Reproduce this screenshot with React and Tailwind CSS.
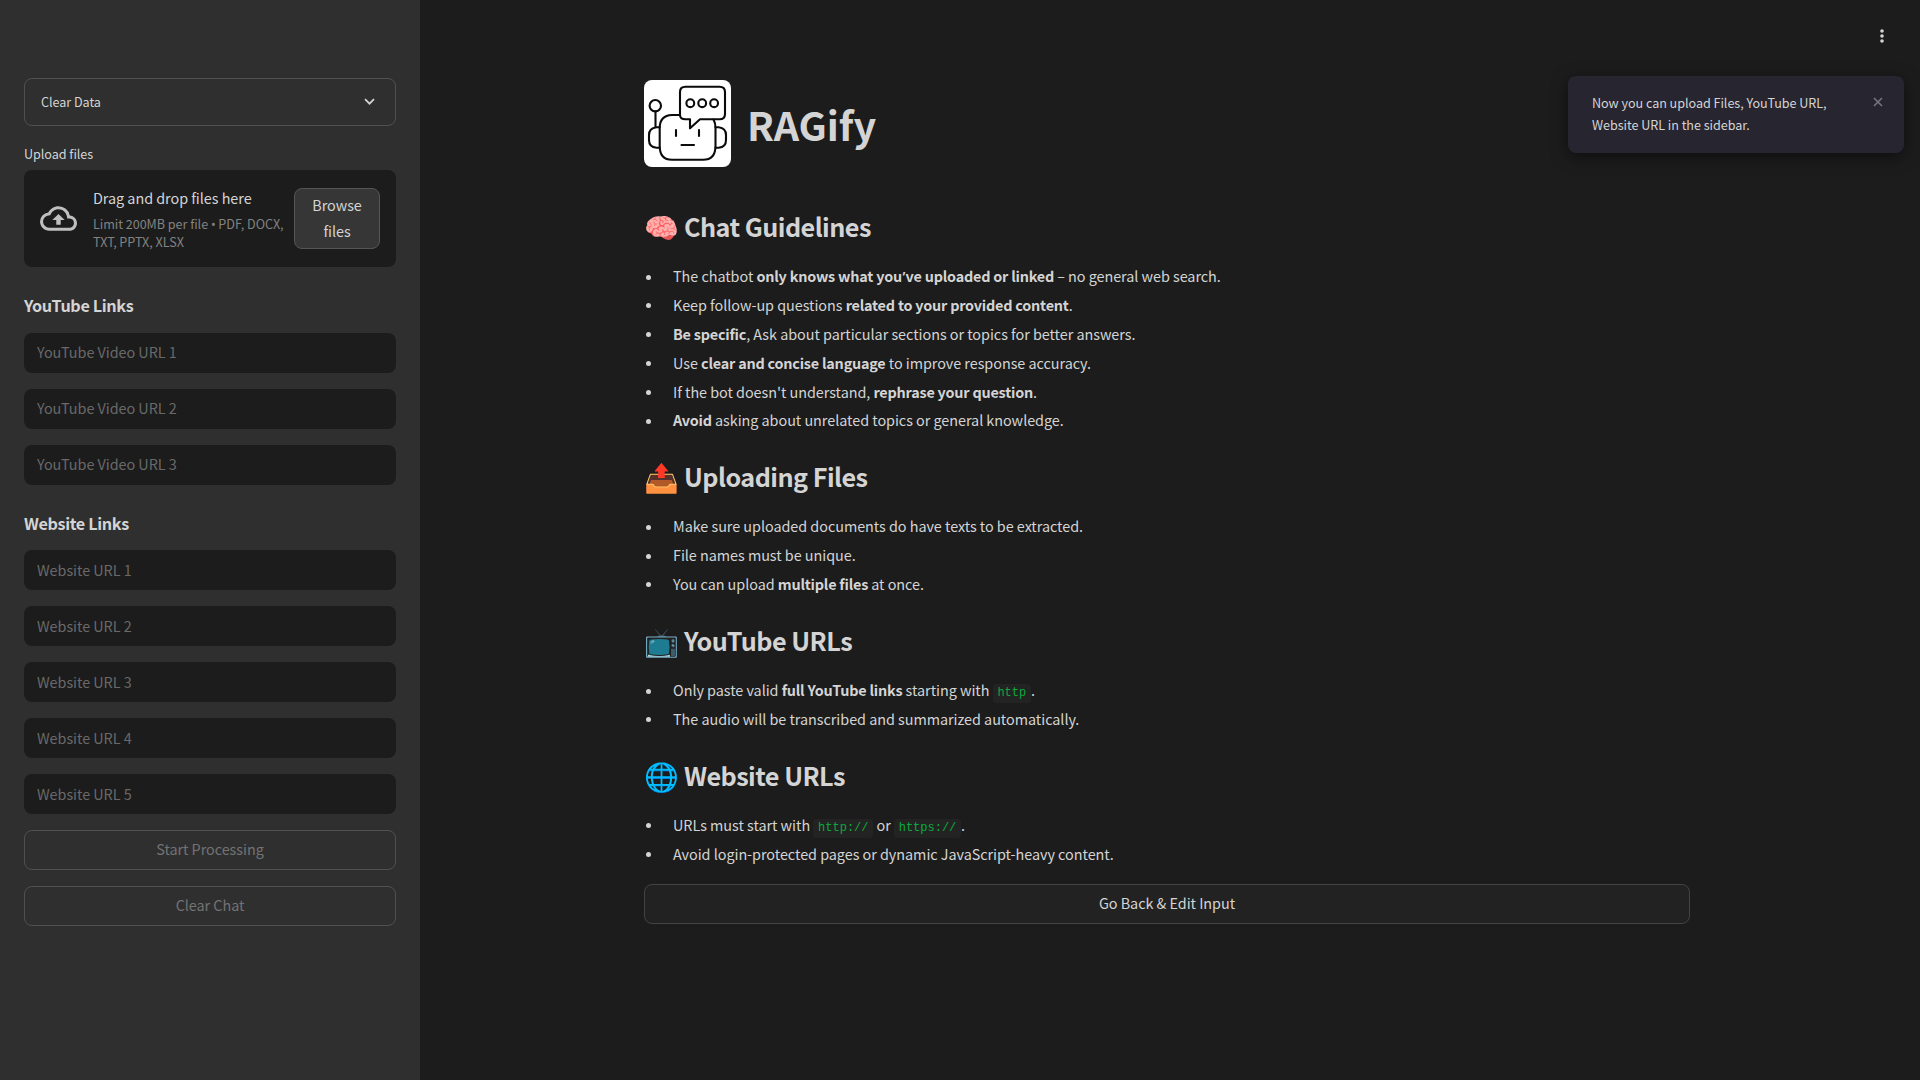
const YOUTUBE = ["YouTube Video URL 1", "YouTube Video URL 2", "YouTube Video URL 3"];
const WEBSITES = ["Website URL 1", "Website URL 2", "Website URL 3", "Website URL 4", "Website URL 5"];

function Field({ placeholder, pad = "pb-[3px]" }) {
  return (
    <input
      placeholder={placeholder}
      className={`block h-10 w-full rounded-lg bg-[#1c1c1c] px-[13px] text-[14.4px] text-[#d4d4d4] placeholder:text-[#696969] placeholder:opacity-100 outline-none ${pad}`}
    />
  );
}

function SideButton({ children }) {
  return (
    <button className="h-10 w-full rounded-lg border border-[#505050] pb-0.5 text-[14.4px] leading-[25.6px] text-[#737373]">
      {children}
    </button>
  );
}

function Section({ icon, title, children }) {
  return (
    <section className="pb-[16.6px]">
      <h3 className="flex items-center gap-2 pt-2 pb-4 text-[25.2px] leading-[33.6px] font-semibold tracking-[-0.53px]">
        <span className="w-8 text-[28px] tracking-normal saturate-[1.3]">{icon}</span>
        <span>{title}</span>
      </h3>
      <ul className="flex flex-col gap-[3.2px] pt-[3.8px] pb-[2.6px]">{children}</ul>
    </section>
  );
}

function Item({ children }) {
  return (
    <li className="flex h-[25.6px] items-center text-[14.4px] leading-[25.6px]">
      <span className="mt-[2px] mr-[22px] ml-[2px] size-[5px] rounded-full bg-[#d4d4d4]" />
      <span className="whitespace-pre">{children}</span>
    </li>
  );
}

function B({ children }) {
  return <strong className="font-semibold tracking-[-0.21px]">{children}</strong>;
}

function Code({ children }) {
  return (
    <code className="inline-block h-[19px] rounded bg-[#232323] px-[4.8px] align-baseline font-['Liberation_Mono',monospace] text-[12px] leading-[19px] tracking-normal text-[#09ab3b]">
      {children}
    </code>
  );
}

function Logo() {
  return (
    <svg className="size-[87px] rounded-lg bg-white" viewBox="0 0 87 87" fill="none" stroke="#0b0b0b" strokeWidth="2.1" strokeLinecap="round" strokeLinejoin="round">
      <circle cx="11.3" cy="25.700" r="5.700" />
      <path d="M11.500 31.500V47" />
      <path d="M15.700 47.200H12.500Q5 48 5 55V60Q5 67 12.500 67.800H15.700" />
      <path d="M71.500 47.200H74.700Q82 48 82 55V60Q82 67 74.700 67.800H71.500" />
      <path d="M36 35H28Q15.700 35.500 15.700 48V66Q15.700 79.800 28 79.800H59Q71.500 79.800 71.500 66V48Q71.500 43 69.500 39.500" />
      <path d="M36 35V12Q36 6.700 41.500 6.700H75.500Q81 6.700 81 12V34Q81 39.300 75.500 39.300H56L46 48.300V39.300H41.500Q36 39.300 36 35Z" />
      <circle cx="46.300" cy="23.200" r="3.900" />
      <circle cx="58.200" cy="23.200" r="3.900" />
      <circle cx="70.100" cy="23.200" r="3.900" />
      <path d="M32 50V56M55 50V56M37.500 65H50" />
    </svg>
  );
}

export default function App() {
  return (
    <div className="flex h-screen w-full overflow-hidden bg-[#1c1c1c] font-['Noto_Sans_CJK_SC',sans-serif] tracking-[-0.04px] text-[#d4d4d4]">
      <aside className="w-[420px] shrink-0 bg-[#2f2f2f] px-6 pt-[78px]">
        <div className="flex h-12 items-center justify-between rounded-lg border border-[#505050] px-4 text-[12.6px]">
          <span>Clear Data</span>
          <svg className="mr-1 mb-[2px] size-[11px]" viewBox="0 0 11 11" fill="none" stroke="#d4d4d4" strokeWidth="1.7">
            <path d="M1 3.200L5.500 7.700L10 3.200" />
          </svg>
        </div>
        <p className="mt-4 h-7 text-[12.6px] leading-6">Upload files</p>
        <div className="flex h-[97px] items-center rounded-lg bg-[#1c1c1c] px-4">
          <svg className="mr-4 size-[37px] shrink-0 fill-[#bfbfbf]" viewBox="0 0 24 24">
            <path d="M19.350 10.040A7.490 7.490 0 0 0 12 4C9.110 4 6.600 5.640 5.350 8.040A5.994 5.994 0 0 0 0 14c0 3.310 2.690 6 6 6h13c2.760 0 5-2.240 5-5 0-2.640-2.050-4.780-4.650-4.960zM19 18H6c-2.210 0-4-1.790-4-4 0-2.050 1.530-3.760 3.560-3.970l1.070-.110.500-.950A5.469 5.469 0 0 1 12 6c2.620 0 4.880 1.860 5.390 4.430l.300 1.500 1.530.110A2.980 2.980 0 0 1 22 15c0 1.650-1.350 3-3 3zM8 13h2.550v3h2.900v-3H16l-4-4z" />
          </svg>
          <div className="w-[201px] shrink-0 pb-0.5">
            <p className="text-[14.4px] leading-[25.6px]">Drag and drop files here</p>
            <p className="mt-[5px] text-[12.6px] leading-[17px] whitespace-nowrap text-[#828282]">
              Limit 200MB per file <span className="font-['Noto_Sans']">•</span> PDF, DOCX,
              <br />
              TXT, PPTX, XLSX
            </p>
          </div>
          <button className="h-[61px] w-[86px] shrink-0 rounded-lg border border-[#555] bg-[#363636] pb-0.5 text-[14.4px] leading-[25.600px]">
            Browse
            <br />
            files
          </button>
        </div>
        <h4 className="mt-[25px] mb-[15px] text-[16.2px] leading-[26px] font-semibold tracking-[-0.36px]">YouTube Links</h4>
        <div className="flex flex-col gap-4">
          {YOUTUBE.map((p) => (
            <Field key={p} placeholder={p} />
          ))}
        </div>
        <h4 className="mt-[25px] mb-[14px] text-[16.2px] leading-[26px] font-semibold tracking-[-0.36px]">Website Links</h4>
        <div className="flex flex-col gap-4">
          {WEBSITES.map((p) => (
            <Field key={p} placeholder={p} pad="pb-[1px]" />
          ))}
          <SideButton>Start Processing</SideButton>
          <SideButton>Clear Chat</SideButton>
        </div>
      </aside>

      <main className="relative flex-1 pt-20 pl-56">
        <div className="w-[1046px]">
          <header className="flex h-[122px] items-start">
            <Logo />
            <h1 className="ml-4 text-[39.6px] leading-[88px] font-bold">RAGify</h1>
          </header>
          <Section icon="🧠" title="Chat Guidelines">
            <Item>The chatbot <B>only knows what you<span className="mx-[0.5px] font-['Noto_Sans']">’</span>ve uploaded or linked</B> – no general web search.</Item>
            <Item>Keep follow-up questions <B>related to your provided content</B>.</Item>
            <Item><B>Be specific</B>, Ask about particular sections or topics for better answers.</Item>
            <Item>Use <B>clear and concise language</B> to improve response accuracy.</Item>
            <Item>If the bot doesn't understand, <B>rephrase your question</B>.</Item>
            <Item><B>Avoid</B> asking about unrelated topics or general knowledge.</Item>
          </Section>
          <Section icon="📤" title="Uploading Files">
            <Item>Make sure uploaded documents do have texts to be extracted.</Item>
            <Item>File names must be unique.</Item>
            <Item>You can upload <B>multiple files</B> at once.</Item>
          </Section>
          <Section icon="📺" title="YouTube URLs">
            <Item>Only paste valid <B>full YouTube links</B> starting with <Code>http</Code>.</Item>
            <Item>The audio will be transcribed and summarized automatically.</Item>
          </Section>
          <Section icon="🌐" title="Website URLs">
            <Item>URLs must start with <Code>http://</Code> or <Code>https://</Code>.</Item>
            <Item>Avoid login-protected pages or dynamic JavaScript-heavy content.</Item>
          </Section>
          <button className="-mt-0.5 block h-10 w-full rounded-lg border border-[#434343] bg-[#222] pb-0.5 text-[14.4px]">
            Go Back &amp; Edit Input
          </button>
        </div>

        <svg className="absolute top-[28px] right-[35px] h-4 w-[6px] fill-[#d4d4d4]" viewBox="0 0 6 16">
          <circle cx="3" cy="3" r="1.800" />
          <circle cx="3" cy="8" r="1.800" />
          <circle cx="3" cy="13" r="1.800" />
        </svg>
        <div className="absolute top-[76px] right-4 flex h-[77px] w-[336px] items-start justify-between rounded-lg bg-[#272530] pt-[16px] pr-[21px] pl-6 text-[12.6px] leading-[22.400px] shadow-[0_4px_16px_rgba(0,0,0,0.5)]">
          <p>
            Now you can upload Files, YouTube URL,
            <br />
            Website URL in the sidebar.
          </p>
          <svg className="mt-[5px] size-[10px]" viewBox="0 0 10 10" stroke="#77767c" strokeWidth="1.600">
            <path d="M1 1L9 9M9 1L1 9" />
          </svg>
        </div>
      </main>
    </div>
  );
}
